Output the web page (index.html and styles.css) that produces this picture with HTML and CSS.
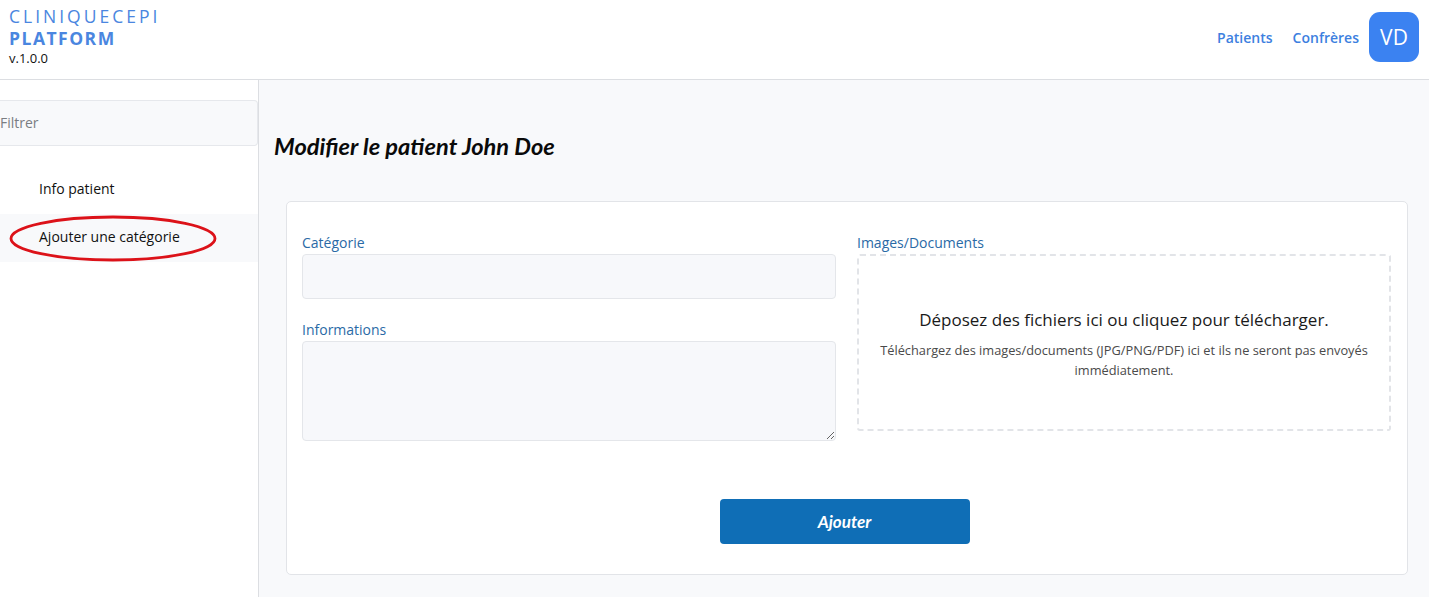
FILE: index.html
```html
<!DOCTYPE html>
<html lang="fr">
<head>
<meta charset="utf-8">
<title>CliniqueCepi Platform</title>
<link rel="stylesheet" href="styles.css">
</head>
<body>
<header class="topbar">
  <div class="brand">
    <div class="brand-top">CLINIQUECEPI</div>
    <div class="brand-bottom">PLATFORM</div>
    <div class="brand-version">v.1.0.0</div>
  </div>
  <nav class="topnav">
    <a class="nav-link" href="#">Patients</a>
    <a class="nav-link" href="#">Confrères</a>
    <div class="avatar">VD</div>
  </nav>
</header>
<div class="layout">
  <aside class="sidebar">
    <input class="filter" type="text" placeholder="Filtrer">
    <ul class="menu">
      <li class="menu-item">Info patient</li>
      <li class="menu-item active">Ajouter une catégorie
        <svg class="ring" width="210" height="48" viewBox="0 0 210 48"><ellipse cx="104" cy="23.5" rx="102" ry="21.5" fill="none" stroke="#dc1219" stroke-width="2.8"/></svg>
      </li>
    </ul>
  </aside>
  <main class="main">
    <h1 class="title">Modifier le patient John Doe</h1>
    <section class="card">
      <div class="grid">
        <div class="col">
          <label class="label">Catégorie</label>
          <input class="field" type="text">
          <label class="label label-gap">Informations</label>
          <textarea class="field area"></textarea>
        </div>
        <div class="col">
          <label class="label">Images/Documents</label>
          <div class="drop">
            <div class="drop-title">Déposez des fichiers ici ou cliquez pour télécharger.</div>
            <div class="drop-sub">Téléchargez des images/documents (JPG/PNG/PDF) ici et ils ne seront pas envoyés immédiatement.</div>
          </div>
        </div>
      </div>
      <div class="actions">
        <button class="btn" type="button">Ajouter</button>
      </div>
    </section>
  </main>
</div>
</body>
</html>
```
FILE: styles.css
```css
* { box-sizing: border-box; }
html, body { margin: 0; padding: 0; }
body {
  font-family: "Open Sans", "Liberation Sans", sans-serif;
  color: #111;
  background: #f8f9fb;
  height: 597px;
  overflow: hidden;
}
.topbar {
  height: 80px;
  background: #fff;
  border-bottom: 1px solid #dcdee2;
  display: flex;
  justify-content: space-between;
  align-items: flex-start;
  padding: 0 10px 0 9px;
}
.brand { padding-top: 8px; line-height: 1; }
.brand-top {
  color: #4a86e0;
  font-size: 17.5px;
  letter-spacing: 3px;
  height: 22px;
}
.brand-bottom {
  color: #4a86e0;
  font-size: 17.5px;
  font-weight: 700;
  letter-spacing: 1.5px;
  height: 22px;
}
.brand-version { font-size: 13px; color: #111; }
.topnav {
  display: flex;
  align-items: center;
  height: 74px;
  gap: 0;
}
.nav-link {
  color: #3d7fe0;
  font-size: 14px;
  font-weight: 600;
  text-decoration: none;
  margin-right: 20px;
}
.nav-link + .nav-link { margin-right: 10px; }
.avatar {
  width: 50px;
  height: 50px;
  border-radius: 11px;
  background: #3b82f1;
  color: #fff;
  font-size: 21px;
  display: flex;
  align-items: center;
  justify-content: center;
}
.layout { display: flex; height: 517px; }
.sidebar {
  width: 259px;
  background: #fff;
  border-right: 1px solid #dcdee2;
  padding-top: 20px;
}
.filter {
  display: block;
  width: 258px;
  height: 46px;
  border: 1px solid #e6e8ec;
  border-left: none;
  border-radius: 0 4px 4px 0;
  background: #f8f9fb;
  padding: 0 0 2px;
  font: inherit;
  font-size: 14px;
  outline: none;
}
.filter::placeholder { color: #7a7d82; }
.menu { list-style: none; margin: 20px 0 0; padding: 0; }
.menu-item {
  position: relative;
  height: 48px;
  line-height: 46px;
  padding-left: 39px;
  font-size: 14px;
  color: #111;
}
.menu-item.active { background: #f8f9fb; }
.ring { position: absolute; left: 9px; top: 1px; }
.main { flex: 1; padding: 0 21px 0 15px; }
.title {
  font-family: Lato, "Open Sans", sans-serif;
  font-style: italic;
  font-weight: 700;
  font-size: 23.6px;
  margin: 51px 0 0;
  line-height: 30px;
  color: #0a0a0a;
}
.card {
  margin: 40px 0 0 12px;
  background: #fff;
  border: 1px solid #e2e4e8;
  border-radius: 5px;
  padding: 31px 16px 30px 15px;
}
.grid {
  display: grid;
  grid-template-columns: 1fr 1fr;
  gap: 21px;
}
.col { display: flex; flex-direction: column; }
.label {
  color: #2a6aa6;
  font-size: 14px;
  line-height: 20px;
  margin-bottom: 1px;
}
.label-gap { margin-top: 21px; }
.field {
  height: 45px;
  background: #f7f8fb;
  border: 1px solid #e4e6ea;
  border-radius: 4px;
  font: inherit;
  outline: none;
}
.area { height: 100px; resize: vertical; }
.drop {
  height: 177px;
  border: 2px dashed #e2e4e8;
  border-radius: 3px;
  display: flex;
  flex-direction: column;
  align-items: center;
  justify-content: center;
  text-align: center;
  padding: 2px 16px 0;
}
.drop-title { font-size: 17px; color: #1a1a1a; margin-bottom: 9px; }
.drop-sub { font-size: 12.8px; color: #4a4a4a; line-height: 20px; }
.actions { display: flex; justify-content: center; margin-top: 58px; padding-right: 4px; }
.btn {
  width: 250px;
  height: 45px;
  background: #0f6eb6;
  color: #fff;
  border: none;
  border-radius: 4px;
  font-family: Lato, sans-serif;
  font-weight: 700;
  font-style: italic;
  font-size: 17px;
}
```
